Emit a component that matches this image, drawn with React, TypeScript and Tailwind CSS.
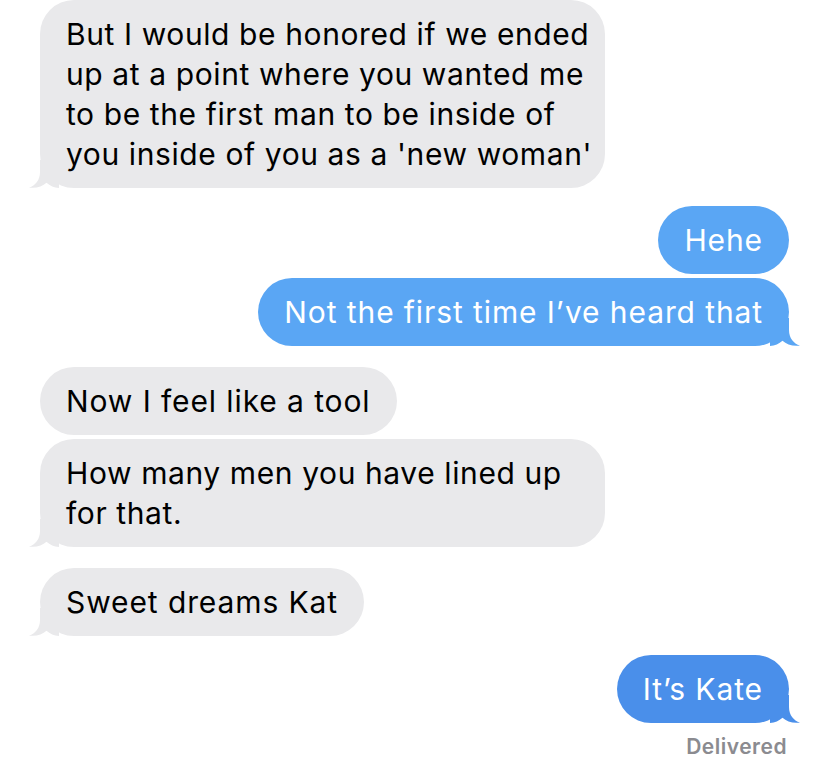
import React from "react"

type Msg = { lines: string[]; me: boolean; tail: boolean; color?: string }

const messages: Msg[] = [
  {
    lines: [
      "But I would be honored if we ended",
      "up at a point where you wanted me",
      "to be the first man to be inside of",
      "you inside of you as a 'new woman'",
    ],
    me: false,
    tail: true,
  },
  { lines: ["Hehe"], me: true, tail: false },
  { lines: ["Not the first time I\u2019ve heard that"], me: true, tail: true },
  { lines: ["Now I feel like a tool"], me: false, tail: false },
  { lines: ["How many men you have lined up", "for that."], me: false, tail: true },
  { lines: ["Sweet dreams Kat"], me: false, tail: true },
  { lines: ["It\u2019s Kate"], me: true, tail: true, color: "dark" },
]

function Tail({ me, fill }: { me: boolean; fill: string }) {
  return (
    <svg
      width="30"
      height="28"
      viewBox="0 0 30 28"
      className={`absolute bottom-0 ${me ? "right-[-11px] scale-x-[-1]" : "left-[-11px]"}`}
    >
      <path
        d="M11 0 L11 12 C11 20 6.5 25.5 0 27.6 C7 28.6 13.5 26.6 17.5 22.8 C21 26 25 27.6 30 28 L30 0 Z"
        fill={fill}
      />
    </svg>
  )
}

function Bubble({ msg, mt }: { msg: Msg; mt: string }) {
  const fill = msg.me ? (msg.color === "dark" ? "#4a8fea" : "#5aa6f4") : "#e9e9eb"
  const bg = msg.me
    ? msg.color === "dark"
      ? "bg-[#4a8fea] text-white"
      : "bg-[#5aa6f4] text-white"
    : "bg-[#e9e9eb] text-black"
  // multi-line bubbles sit at the full max width
  const width = msg.lines.length > 1 ? "w-[565px] tracking-[0.6px]" : "tracking-[0.9px]"

  return (
    <div className={`flex ${msg.me ? "justify-end" : "justify-start"} ${mt}`}>
      <div
        className={`relative rounded-[34px] px-[26px] py-[14px] text-[30px] leading-[40px] ${width} ${bg}`}
      >
        {msg.tail && <Tail me={msg.me} fill={fill} />}
        <div className="relative">
          {msg.lines.map((l, i) => (
            <p key={i} className="whitespace-nowrap">
              {l}
            </p>
          ))}
        </div>
      </div>
    </div>
  )
}

const gaps = ["mt-0", "mt-[18px]", "mt-[4px]", "mt-[21px]", "mt-[4px]", "mt-[21px]", "mt-[19px]"]

export default function App() {
  return (
    <div className="h-[761px] w-[828px] overflow-hidden bg-white font-['Inter',sans-serif]">
      <div className="flex flex-col pl-[40px] pr-[39px]">
        {messages.map((m, i) => (
          <Bubble key={i} msg={m} mt={gaps[i]} />
        ))}
        <p className="mt-[11px] pr-[2px] text-right text-[21px] leading-[26px] font-semibold tracking-[0.5px] text-[#8b8b90]">
          Delivered
        </p>
      </div>
    </div>
  )
}
